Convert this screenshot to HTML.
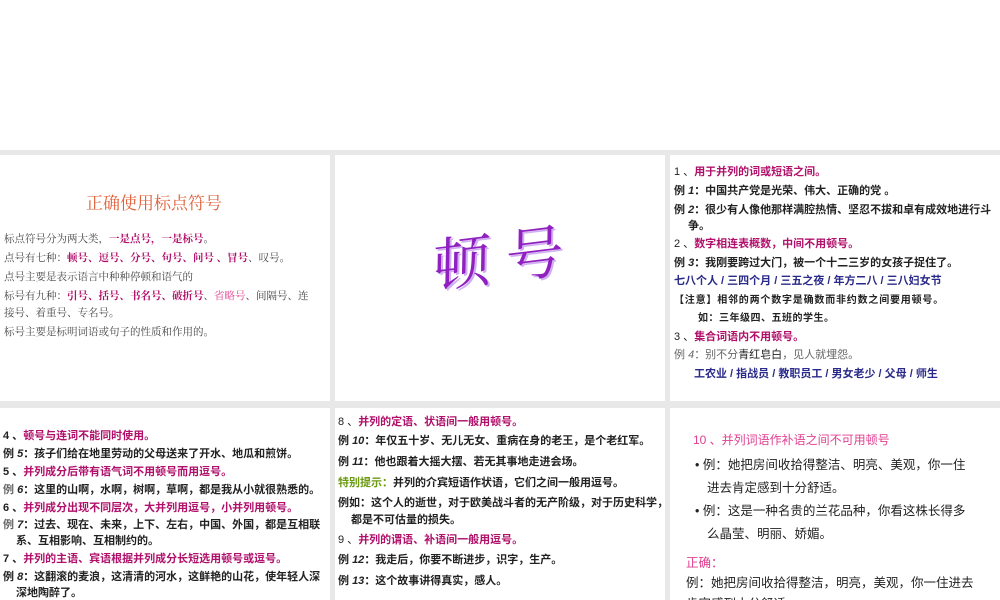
<!DOCTYPE html>
<html><head><meta charset="utf-8"><style>
*{margin:0;padding:0;box-sizing:border-box}
body{width:1000px;height:600px;background:#fff;position:relative;overflow:hidden;font-family:"Liberation Sans","Noto Sans CJK SC",sans-serif;color:#222}
.bg{position:absolute;left:0;top:150px;width:1000px;height:450px;background:#e8e8e8}
.p{position:absolute;background:#fff;overflow:hidden}
.t{position:absolute;white-space:nowrap;font-size:11px;line-height:13px}
.b{font-weight:bold}
.m{color:#b0106a;font-weight:bold}
.n{color:#2a2a8a;font-weight:bold}
.g{color:#666}
.pk{color:#e04090}
.s{color:#444;font-family:'Noto Serif CJK SC',serif;font-size:10.5px}
</style></head><body>
<div class="bg"></div>
<div class="p" style="left:0;top:155px;width:330px;height:246px">
<div class="t" style="left:86px;top:38px;font-size:17px;line-height:22px;color:#e0603a;font-family:'Liberation Serif','Noto Serif CJK SC',serif">正确使用标点符号</div>
<div class="t s" style="left:4px;top:77px">标点符号分为两大类，<span class="m">一是点号，一是标号</span>。</div>
<div class="t s" style="left:4px;top:96px">点号有七种：<span class="m">顿号、逗号、分号、句号、问号 、冒号</span>、叹号。</div>
<div class="t s" style="left:4px;top:115px">点号主要是表示语言中种种停顿和语气的</div>
<div class="t s" style="left:4px;top:134px">标号有九种：<span class="m">引号、括号、书名号、破折号</span>、<span class="pk">省略号</span>、间隔号、连</div>
<div class="t s" style="left:4px;top:151px">接号、着重号、专名号。</div>
<div class="t s" style="left:4px;top:170px">标号主要是标明词语或句子的性质和作用的。</div>
</div>
<div class="p" style="left:335px;top:155px;width:330px;height:246px">
<div class="t" style="left:98px;top:66px;font-size:58px;line-height:66px;font-family:'Noto Serif CJK SC',serif;color:#9020c0;transform:rotate(-7deg) skewX(-8deg);text-shadow:2px 2px 0 #d0b0f0;letter-spacing:0px">顿 号</div>
</div>
<div class="p" style="left:670px;top:155px;width:330px;height:246px">
<div class="t" style="left:4px;top:11px">1 、<span class="m">用于并列的词或短语之间。</span></div>
<div class="t b" style="left:4px;top:30px">例 <i>1</i>：中国共产党是光荣、伟大、正确的党 。</div>
<div class="t b" style="left:4px;top:49px">例 <i>2</i>：很少有人像他那样满腔热情、坚忍不拔和卓有成效地进行斗</div>
<div class="t b" style="left:18px;top:65px">争。</div>
<div class="t" style="left:4px;top:83px">2 、<span class="m">数字相连表概数，中间不用顿号。</span></div>
<div class="t b" style="left:4px;top:102px">例 <i>3</i>：我刚要跨过大门，被一个十二三岁的女孩子捉住了。</div>
<div class="t n" style="left:4px;top:120px">七八个人 / 三四个月 / 三五之夜 / 年方二八 / 三八妇女节</div>
<div class="t b" style="left:4px;top:139px;font-size:10px;letter-spacing:.8px">【注意】相邻的两个数字是确数而非约数之间要用顿号。</div>
<div class="t b" style="left:28px;top:157px;font-size:10px;letter-spacing:.5px">如：三年级四、五班的学生。</div>
<div class="t" style="left:4px;top:176px">3 、<span class="m">集合词语内不用顿号。</span></div>
<div class="t g" style="left:4px;top:194px">例 <i>4</i>：别不分<span style="color:#222">青红皂白</span>，见人就埋怨。</div>
<div class="t n" style="left:24px;top:213px">工农业 / 指战员 / 教职员工 / 男女老少 / 父母 / 师生</div>
</div>
<div class="p" style="left:0;top:408px;width:330px;height:192px">
<div class="t b" style="left:3px;top:22px">4 、<span class="m">顿号与连词不能同时使用。</span></div>
<div class="t b" style="left:3px;top:40px">例 <i>5</i>：孩子们给在地里劳动的父母送来了开水、地瓜和煎饼。</div>
<div class="t b" style="left:3px;top:58px">5 、<span class="m">并列成分后带有语气词不用顿号而用逗号。</span></div>
<div class="t b" style="left:3px;top:76px"><span class="g">例</span> <i>6</i>：这里的山啊，水啊，树啊，草啊，都是我从小就很熟悉的。</div>
<div class="t b" style="left:3px;top:94px">6 、<span class="m">并列成分出现不同层次，大并列用逗号，小并列用顿号。</span></div>
<div class="t b" style="left:3px;top:111px"><span class="g">例</span> <i>7</i>：过去、现在、未来，上下、左右，中国、外国，都是互相联</div>
<div class="t b" style="left:16px;top:127px">系、互相影响、互相制约的。</div>
<div class="t b" style="left:3px;top:145px">7 、<span class="m">并列的主语、宾语根据并列成分长短选用顿号或逗号。</span></div>
<div class="t b" style="left:3px;top:163px">例 <i>8</i>：这翻滚的麦浪，这清清的河水，这鲜艳的山花，使年轻人深</div>
<div class="t b" style="left:16px;top:179px">深地陶醉了。</div>
</div>
<div class="p" style="left:335px;top:408px;width:330px;height:192px">
<div class="t" style="left:3px;top:8px">8 、<span class="m">并列的定语、状语间一般用顿号。</span></div>
<div class="t b" style="left:3px;top:27px">例 <i>10</i>：年仅五十岁、无儿无女、重病在身的老王，是个老红军。</div>
<div class="t b" style="left:3px;top:48px">例 <i>11</i>：他也跟着大摇大摆、若无其事地走进会场。</div>
<div class="t b" style="left:3px;top:69px"><span style="color:#6a9a10">特别提示：</span>并列的介宾短语作状语，它们之间一般用逗号。</div>
<div class="t b" style="left:3px;top:89px">例如：这个人的逝世，对于欧美战斗者的无产阶级，对于历史科学，</div>
<div class="t b" style="left:16px;top:106px">都是不可估量的损失。</div>
<div class="t" style="left:3px;top:126px">9 、<span class="m">并列的谓语、补语间一般用逗号。</span></div>
<div class="t b" style="left:3px;top:146px">例 <i>12</i>：我走后，你要不断进步，识字，生产。</div>
<div class="t b" style="left:3px;top:167px">例 <i>13</i>：这个故事讲得真实，感人。</div>
</div>
<div class="p" style="left:670px;top:408px;width:330px;height:192px">
<div class="t pk" style="left:23px;top:24px;font-size:12px;line-height:16px">10 、并列词语作补语之间不可用顿号</div>
<div class="t" style="left:25px;top:49px;font-size:12.5px;line-height:17px">• 例：她把房间收拾得整洁、明亮、美观，你一住</div>
<div class="t" style="left:37px;top:72px;font-size:12.5px;line-height:17px">进去肯定感到十分舒适。</div>
<div class="t" style="left:25px;top:95px;font-size:12.5px;line-height:17px">• 例：这是一种名贵的兰花品种，你看这株长得多</div>
<div class="t" style="left:37px;top:118px;font-size:12.5px;line-height:17px">么晶莹、明丽、娇媚。</div>
<div class="t pk" style="left:16px;top:147px;font-size:12.5px;line-height:17px">正确：</div>
<div class="t" style="left:16px;top:167px;font-size:12.5px;line-height:17px">例：她把房间收拾得整洁，明亮，美观，你一住进去</div>
<div class="t" style="left:16px;top:188px;font-size:12.5px;line-height:17px">肯定感到十分舒适。</div>
</div>
</body></html>
